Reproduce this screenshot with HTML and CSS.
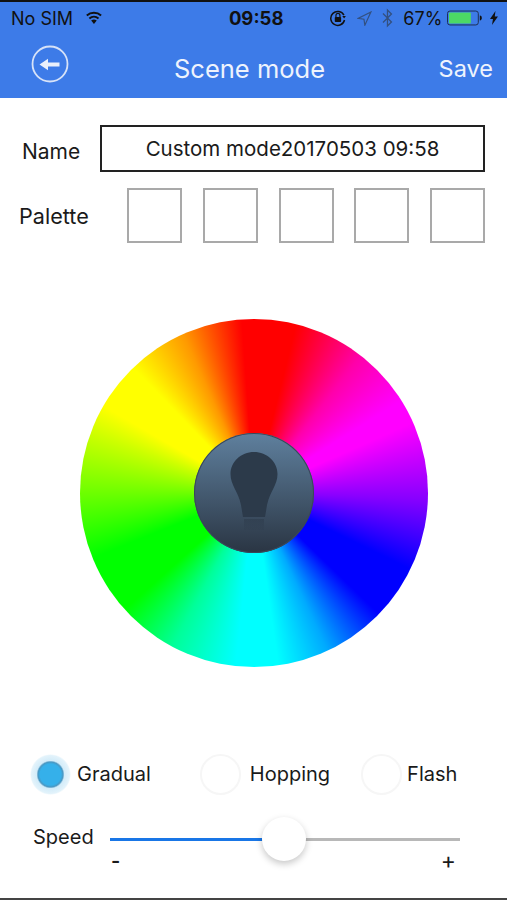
FILE: index.html
```html
<!DOCTYPE html>
<html lang="en">
<head>
<meta charset="utf-8">
<title>Scene mode</title>
<link rel="stylesheet" href="styles.css">
</head>
<body>
<div class="page">
  <header class="header">
    <div class="status">
      <span class="carrier">No SIM</span>
      <svg class="wifi" width="18" height="14" viewBox="0 0 18 14"><path d="M9 13 6.2 9.6a4.4 4.4 0 0 1 5.6 0Z" fill="#111"/><path d="M4.4 7.4a7.2 7.2 0 0 1 9.2 0M1.8 4.4a11 11 0 0 1 14.4 0" fill="none" stroke="#111" stroke-width="2"/></svg>
      <span class="clock">09:58</span>
      <svg class="lock" width="18" height="18" viewBox="0 0 18 18"><path d="M15 6.2A7 7 0 1 0 15.6 11" fill="none" stroke="#111" stroke-width="1.5"/><path d="M13.4 7h3.6l-1.8 2.4Z" fill="#111"/><rect x="5.8" y="8" width="6.4" height="5" rx=".8" fill="#111"/><path d="M7 8V6.4a2 2 0 0 1 4 0V8" fill="none" stroke="#111" stroke-width="1.2"/></svg>
      <svg class="loc" width="15" height="15" viewBox="0 0 15 15"><path d="M14 1 1 7.4l6 .8.9 6Z" fill="none" stroke="#33507f" stroke-width="1.2"/></svg>
      <svg class="bt" width="11" height="20" viewBox="0 0 11 20"><path d="M1 5.5 9.5 14 5.5 18V2l4 4L1 14.500" fill="none" stroke="#33507f" stroke-width="1.3"/></svg>
      <span class="pct">67%</span>
      <svg class="batt" width="36" height="16" viewBox="0 0 36 16"><rect x=".5" y="1" width="31" height="14" rx="2.500" fill="none" stroke="#1d2f55" stroke-width="1"/><rect x="2" y="2.500" width="22" height="11" rx="1" fill="#4cd964"/><path d="M33 5.500c1.500.3 2 1.200 2 2.500s-.5 2.200-2 2.500Z" fill="#111"/></svg>
      <svg class="bolt" width="8" height="14" viewBox="0 0 8 14"><path d="M5.500 0 0 8h3l-1 6 6-8.500H4.800Z" fill="#111"/></svg>
    </div>
    <div class="nav">
      <svg class="back" width="38" height="38" viewBox="0 0 38 38"><circle cx="19" cy="19" r="17.500" fill="none" stroke="#d6e2f8" stroke-width="1.800"/><path d="M8.500 19.500 17 13.800v3.700h11.500v4H17v3.700Z" fill="#e9effb"/></svg>
      <span class="title">Scene mode</span>
      <span class="save">Save</span>
    </div>
  </header>

  <main class="main">
    <div class="name-row">
      <span class="label name-label">Name</span>
      <div class="name-box">Custom mode20170503 09:58</div>
    </div>
    <div class="palette-row">
      <span class="label palette-label">Palette</span>
      <div class="swatches">
        <div class="swatch"></div>
        <div class="swatch"></div>
        <div class="swatch"></div>
        <div class="swatch"></div>
        <div class="swatch"></div>
      </div>
    </div>

    <div class="wheel">
      <div class="hub">
        <svg width="120" height="120" viewBox="0 0 120 120"><defs><linearGradient id="base" x1="0" y1="0" x2="0" y2="1"><stop offset="0" stop-color="#2c3a4a" stop-opacity=".55"/><stop offset="1" stop-color="#2c3a4a" stop-opacity=".15"/></linearGradient></defs><path d="M60 19C47 19 36.500 29 36.500 41c0 11 7.500 17 10.500 31l2 12h22l2-12c3-14 10.500-20 10.500-31C83.500 29 73 19 60 19Z" fill="#2c3a4a"/><rect x="50" y="86" width="20" height="11" fill="url(#base)"/></svg>
      </div>
    </div>

    <div class="modes">
      <div class="mode mode-gradual"><span class="radio radio-on"></span><span class="mode-text">Gradual</span></div>
      <div class="mode mode-hopping"><span class="radio"></span><span class="mode-text">Hopping</span></div>
      <div class="mode mode-flash"><span class="radio"></span><span class="mode-text">Flash</span></div>
    </div>

    <div class="speed">
      <span class="speed-label">Speed</span>
      <div class="slider">
        <div class="track"><div class="fill"></div><div class="rest"></div></div>
        <div class="thumb"></div>
        <div class="ends"><span class="minus">-</span><span class="plus">+</span></div>
      </div>
    </div>
  </main>
  <div class="bottom-line"></div>
</div>
</body>
</html>
```
FILE: styles.css
```css
* { box-sizing: border-box; }
html, body { margin: 0; padding: 0; }
body { background: #fff; font-family: "Inter", "Liberation Sans", sans-serif; color: #1a1a1a; }
.page { width: 507px; height: 900px; display: flex; flex-direction: column; overflow: hidden; }

.header { height: 98px; flex: none; background: #3d7be8; border-top: 2px solid #111; display: flex; flex-direction: column; }
.status { height: 32px; display: flex; align-items: center; padding: 0 9px 0 11px; font-size: 18px; color: #111; }
.carrier { width: 62px; white-space: nowrap; }
.wifi { margin-left: 12px; }
.clock { margin-left: 126px; width: 55px; font-weight: 700; font-size: 18.500px; white-space: nowrap; }
.lock { margin-left: 45px; }
.loc { margin-left: 11px; }
.bt { margin-left: 10px; }
.pct { margin-left: 10px; width: 38px; white-space: nowrap; }
.batt { margin-left: 6px; }
.bolt { margin-left: 7px; }

.nav { flex: 1; display: flex; align-items: center; padding: 0 14px 0 31px; color: #eef3fd; }
.back { flex: none; margin-top: -4px; }
.title { margin-left: 105px; width: 266px; font-size: 25.500px; white-space: nowrap; padding-top: 5px; }
.save { font-size: 23.500px; white-space: nowrap; padding-top: 4px; }

.main { flex: 1; display: flex; flex-direction: column; }
.label { font-size: 21px; white-space: nowrap; }
.name-row { display: flex; align-items: center; margin-top: 27px; padding-left: 22px; }
.name-label { width: 78px; padding-top: 6px; }
.name-box { width: 385px; height: 47px; border: 2px solid #222; display: flex; align-items: center; justify-content: center; font-size: 20.500px; padding-bottom: 1px; white-space: nowrap; }
.palette-row { display: flex; align-items: center; margin-top: 16px; padding-left: 19px; }
.palette-label { width: 108px; font-size: 21.600px; }
.swatches { display: flex; gap: 20.750px; }
.swatch { width: 55px; height: 55px; border: 2px solid #a9a9a9; background: #fff; }

.wheel { width: 348px; height: 348px; margin: 76px 0 0 80px; border-radius: 50%; display: flex; align-items: center; justify-content: center; background: conic-gradient(from 0deg, #f00 0deg, #f00 14deg, #f0a 38deg, #f0f 58deg, #f0f 66deg, #80f 92deg, #00f 116deg, #00f 134deg, #0af 155deg, #0ff 172deg, #0ff 186deg, #0f9 208deg, #0f0 228deg, #0f0 248deg, #7f0 272deg, #cf0 290deg, #ff0 300deg, #ff0 316deg, #f90 336deg, #f40 347deg, #f00 356deg, #f00 360deg); }
.hub { width: 120px; height: 120px; border-radius: 50%; background: linear-gradient(#5f809e, #2a3543); box-shadow: inset 0 0 0 1px #39475a; }
.hub svg { display: block; }

.modes { display: flex; align-items: center; margin-top: 87px; height: 41px; font-size: 20px; }
.mode { display: flex; align-items: center; gap: 9px; line-height: 38px; }
.mode-text { margin-bottom: 2px; }
.mode-gradual { margin-left: 30px; gap: 6px; }
.mode-hopping { margin-left: 49px; }
.mode-flash { margin-left: 31px; gap: 5px; }
.radio { display: block; width: 41px; height: 41px; border-radius: 50%; border: 2px solid #f6f6f6; background: #fff; }
.radio-on { border: 0; background: radial-gradient(circle, #35b0ea 0 10.500px, #4a97c2 12.500px, #d3ecf9 14px, #e3f3fb 19px, transparent 20.500px); }

.speed { display: flex; margin-top: 21px; padding-left: 33px; }
.speed-label { width: 77px; font-size: 20px; line-height: 42px; white-space: nowrap; }
.slider { position: relative; width: 350px; height: 62px; }
.track { display: flex; margin-top: 22px; height: 3px; }
.fill { width: 152px; background: #1976e6; }
.rest { flex: 1; background: #b8b8b8; }
.thumb { position: absolute; left: 152px; top: 1px; width: 44px; height: 44px; border-radius: 50%; background: #fff; box-shadow: 0 3px 7px rgba(0, 0, 0, .22); }
.ends { display: flex; justify-content: space-between; padding: 0 4px 0 2px; margin-top: 5px; font-size: 20px; line-height: 30px; }
.minus { font-weight: 600; margin-left: -1px; }
.plus { font-size: 23px; }
.bottom-line { height: 2px; flex: none; margin-top: -1px; background: #444; }
```
